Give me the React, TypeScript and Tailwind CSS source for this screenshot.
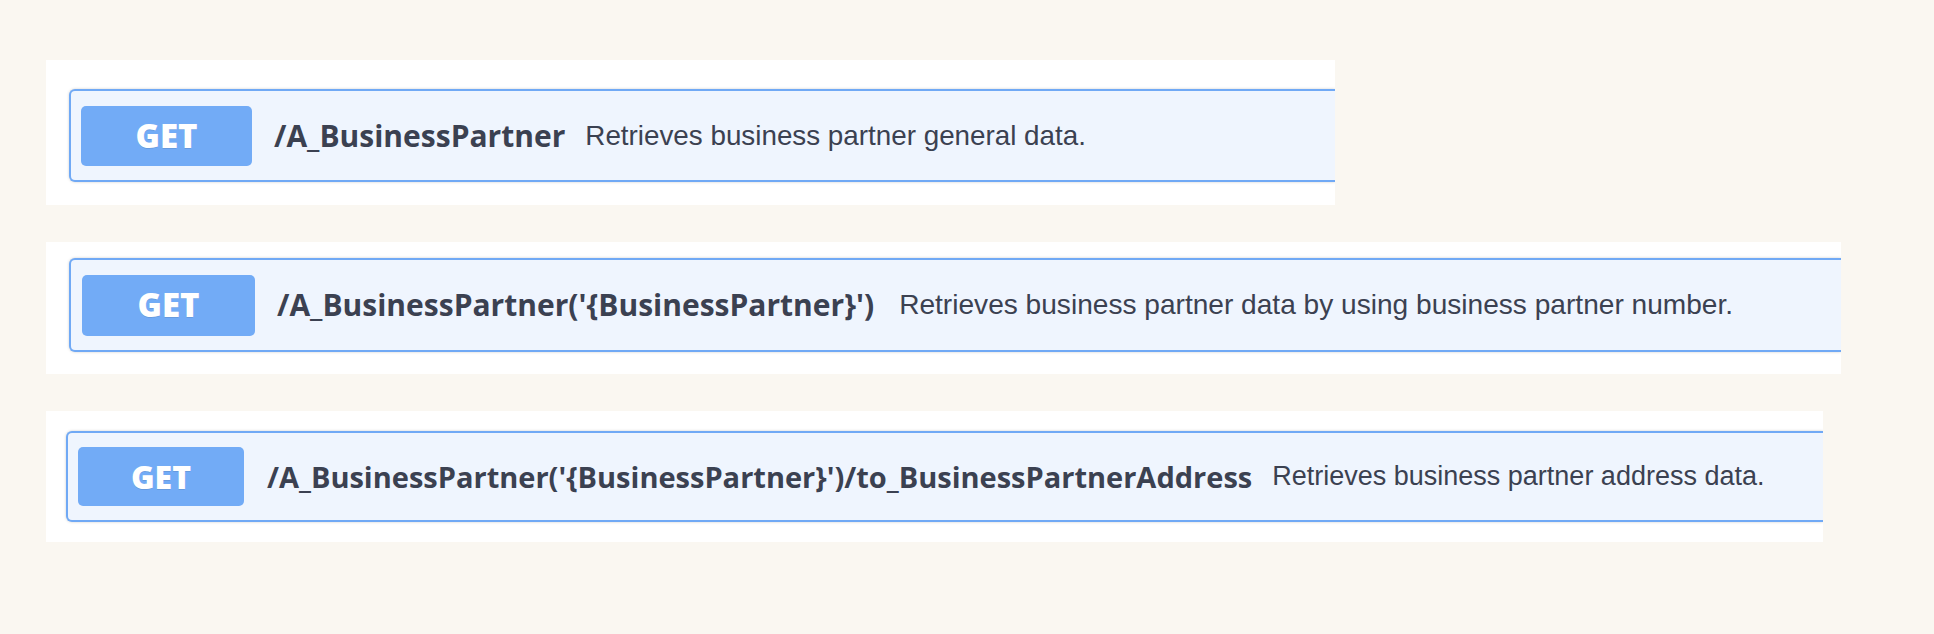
import React from "react";

export default function App() {
  return (
    <div className="min-h-[634px] w-full bg-[#faf7f1] pl-[46px] pt-[60px] flex flex-col gap-[37px]">
      {/* Block 1 */}
      <div className="w-[1289px] h-[145px] bg-white pl-[23px] pt-[29px] overflow-hidden">
        <div className="h-[93px] flex items-center bg-[#eff5fe] border-2 border-r-0 border-[#70a9f5] rounded-l-[6px] shadow-[0_0_3px_rgba(0,0,0,0.19)] pl-[10px]">
          <div className="w-[171px] h-[60px] rounded-[5px] bg-[#72abf6] flex items-center justify-center text-white text-[33px] font-extrabold [font-family:'Open_Sans',sans-serif] [text-shadow:0_1px_0_rgba(0,0,0,0.1)]">
            GET
          </div>
          <div className="ml-[22px] text-[#3b4151] text-[30px] font-bold [font-family:'Open_Sans',sans-serif] whitespace-nowrap leading-none">
            /A_BusinessPartner
          </div>
          <div className="ml-[20px] text-[#3b4151] text-[27.8px] [font-family:'Liberation_Sans',Arial,sans-serif] whitespace-nowrap leading-none">
            Retrieves business partner general data.
          </div>
        </div>
      </div>

      {/* Block 2 */}
      <div className="w-[1795px] h-[132px] bg-white pl-[23px] pt-[16px] overflow-hidden">
        <div className="h-[94px] flex items-center bg-[#eff5fe] border-2 border-r-0 border-[#70a9f5] rounded-l-[6px] shadow-[0_0_3px_rgba(0,0,0,0.19)] pl-[11px]">
          <div className="w-[173px] h-[61px] rounded-[5px] bg-[#72abf6] flex items-center justify-center text-white text-[33px] font-extrabold [font-family:'Open_Sans',sans-serif] [text-shadow:0_1px_0_rgba(0,0,0,0.1)]">
            GET
          </div>
          <div className="ml-[22px] text-[#3b4151] text-[30px] font-bold [font-family:'Open_Sans',sans-serif] whitespace-nowrap leading-none">
            /A_BusinessPartner('{"{"}BusinessPartner{"}"}')
          </div>
          <div className="ml-[25px] text-[#3b4151] text-[28.1px] [font-family:'Liberation_Sans',Arial,sans-serif] whitespace-nowrap leading-none">
            Retrieves business partner data by using business partner number.
          </div>
        </div>
      </div>

      {/* Block 3 */}
      <div className="w-[1777px] h-[131px] bg-white pl-[20px] pt-[20px] overflow-hidden">
        <div className="h-[91px] flex items-center bg-[#eff5fe] border-2 border-r-0 border-[#70a9f5] rounded-l-[6px] shadow-[0_0_3px_rgba(0,0,0,0.19)] pl-[10px]">
          <div className="w-[166px] h-[59px] rounded-[5px] bg-[#72abf6] flex items-center justify-center text-white text-[32px] font-extrabold [font-family:'Open_Sans',sans-serif] [text-shadow:0_1px_0_rgba(0,0,0,0.1)]">
            GET
          </div>
          <div className="ml-[23px] text-[#3b4151] text-[29px] font-bold [font-family:'Open_Sans',sans-serif] whitespace-nowrap leading-none">
            /A_BusinessPartner('{"{"}BusinessPartner{"}"}')/to_BusinessPartnerAddress
          </div>
          <div className="ml-[20px] text-[#3b4151] text-[27px] [font-family:'Liberation_Sans',Arial,sans-serif] whitespace-nowrap leading-none">
            Retrieves business partner address data.
          </div>
        </div>
      </div>
    </div>
  );
}
